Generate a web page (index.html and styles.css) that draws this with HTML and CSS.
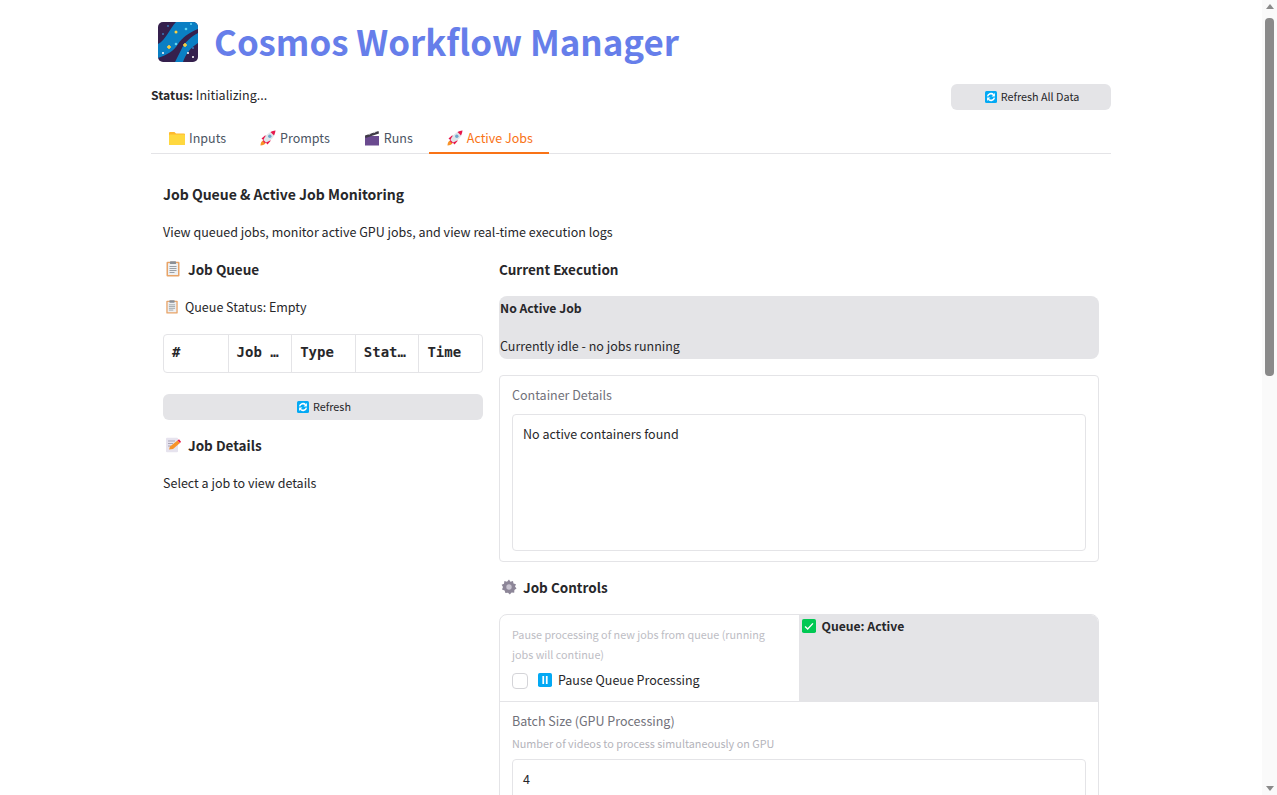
FILE: index.html
```html
<!DOCTYPE html>
<html lang="en">
<head>
    <meta charset="UTF-8">
    <meta name="viewport" content="width=device-width, initial-scale=1.0">
    <title>Cosmos Workflow Manager</title>
    <link rel="stylesheet" href="styles.css">
</head>
<body>

    <svg class="icon-defs" aria-hidden="true">
        <symbol id="i-refresh" viewBox="0 0 16 16">
            <rect width="16" height="16" rx="2" fill="#03a9f4"/>
            <path d="M3.400 7.200A4.700 4.700 0 0 1 11.400 5" fill="none" stroke="#fff" stroke-width="2"/>
            <path d="M12.600 8.800A4.700 4.700 0 0 1 4.600 11" fill="none" stroke="#fff" stroke-width="2"/>
            <path d="M13.200 2.800v4.400H8.800zM2.800 13.200V8.800h4.400z" fill="#fff"/>
        </symbol>
        <symbol id="i-rocket" viewBox="0 0 16 16">
            <path d="M.5 15.500c0-2.500 1-4.500 2.500-5l2.500 2.500c-.5 1.500-2.500 2.500-5 2.500z" fill="#f79329"/>
            <path d="M1.500 8.500 5 5.500 7 6 3.800 10.500zM7.500 14.500l3-3.500-.5-2-4.500 3.200z" fill="#e8174b"/>
            <path d="M3.500 10C5 5.500 9 1.500 15.500.5 15 7 10.500 11 6 12.500z" fill="#dfe6ea"/>
            <path d="M10.500 2C12 1.200 13.800.7 15.500.5 15.300 2.300 14.800 4 14 5.500z" fill="#e8174b"/>
            <circle cx="9.800" cy="6.200" r="1.700" fill="#6fa8cc"/>
            <path d="M3.500 10 6 12.500 5 13.200 2.800 11z" fill="#e8174b"/>
        </symbol>
        <symbol id="i-clipboard" viewBox="0 0 16 16">
            <rect x="1.500" y=".8" width="13" height="14.700" rx="1" fill="#e8a468"/>
            <rect x="3" y="2.200" width="10" height="11.800" fill="#eef0f2"/>
            <rect x="5" y=".3" width="6" height="2.700" rx=".6" fill="#8a8f96"/>
            <path d="M4.500 5.500h7M4.500 7.500h7M4.500 9.500h7M4.500 11.500h5" stroke="#9aa0a6" stroke-width="1"/>
        </symbol>
    </svg>

    <div class="page">
        <div class="container">

            <header class="title-row">
                <svg class="logo" viewBox="0 0 40 40">
                    <defs><clipPath id="logo-clip"><rect width="40" height="40" rx="5"/></clipPath></defs>
                    <g clip-path="url(#logo-clip)">
                        <rect width="40" height="40" fill="#35204d"/>
                        <path d="M0 22C8 18 12 6 18 0H40V7C30 11 24 16 20 22C16 29 9 33 0 36Z" fill="#0a7fc4"/>
                        <path d="M40 11C34 14 27 20 24 26C21 32 19 36 17 40H25C28 32 32 26 40 21Z" fill="#0a7fc4"/>
                        <path d="M9 25h4M11 23v4M25 23h4M27 21v4" stroke="#ffd23f" stroke-width="1.500"/>
                        <circle cx="18" cy="10" r="1.500" fill="#ffd23f"/>
                        <circle cx="28" cy="7" r="1.300" fill="#5fd4f4"/>
                        <circle cx="18" cy="22" r="1.300" fill="#5fd4f4"/>
                        <circle cx="33" cy="2" r="1" fill="#5fd4f4"/>
                        <circle cx="5" cy="31" r="1" fill="#fff"/>
                        <circle cx="35" cy="35" r="1" fill="#fff"/>
                        <circle cx="10" cy="4" r="1" fill="#3a78b8"/>
                        <circle cx="5" cy="12" r="1" fill="#3a78b8"/>
                        <circle cx="30" cy="31" r="1" fill="#fff"/>
                        <circle cx="35" cy="26" r="1" fill="#3a78b8"/>
                    </g>
                </svg>
                <h1>Cosmos Workflow Manager</h1>
            </header>

            <div class="status-row">
                <p class="status"><strong>Status:</strong> Initializing...</p>
                <button class="btn btn-top"><svg class="ico"><use href="#i-refresh"/></svg>Refresh All Data</button>
            </div>

            <nav class="tabs">
                <div class="tab">
                    <svg class="ico-tab" viewBox="0 0 16 16"><path d="M0 3a1 1 0 0 1 1-1h4.500l1.500 1.500H15a1 1 0 0 1 1 1V14a1 1 0 0 1-1 1H1a1 1 0 0 1-1-1z" fill="#ffb92e"/><path d="M0 5.500a1 1 0 0 1 1-1h14a1 1 0 0 1 1 1V14a1 1 0 0 1-1 1H1a1 1 0 0 1-1-1z" fill="#ffd83f"/></svg>
                    Inputs
                </div>
                <div class="tab"><svg class="ico-tab"><use href="#i-rocket"/></svg>Prompts</div>
                <div class="tab">
                    <svg class="ico-tab" viewBox="0 0 16 16"><rect x="1" y="6" width="14" height="9.500" fill="#6a4a8f"/><path d="M1 5.500 14.500 1 15 3.500 1.500 8z" fill="#3e3a45"/><path d="M4 5 5.500 3.400 7.500 2.800 6 4.400zM9 3.300 10.500 1.700 12.500 1.100 11 2.700z" fill="#d8d8dc"/></svg>
                    Runs
                </div>
                <div class="tab tab-active"><svg class="ico-tab"><use href="#i-rocket"/></svg>Active Jobs</div>
            </nav>

            <main class="panel">
                <h2 class="page-heading">Job Queue &amp; Active Job Monitoring</h2>
                <p class="page-desc">View queued jobs, monitor active GPU jobs, and view real-time execution logs</p>

                <div class="columns">
                    <section class="col-left">
                        <h3 class="section-title"><svg class="ico-head"><use href="#i-clipboard"/></svg>Job Queue</h3>
                        <p class="queue-status"><svg class="ico-small"><use href="#i-clipboard"/></svg>Queue Status: Empty</p>

                        <div class="queue-table">
                            <div class="th">#</div>
                            <div class="th">Job …</div>
                            <div class="th">Type</div>
                            <div class="th">Stat…</div>
                            <div class="th">Time</div>
                        </div>

                        <button class="btn btn-wide"><svg class="ico"><use href="#i-refresh"/></svg>Refresh</button>

                        <h3 class="section-title details-title">
                            <svg class="ico-head" viewBox="0 0 16 16"><rect x="1" y=".8" width="12" height="14.500" rx="1" fill="#e6e3ee"/><path d="M3 4h7M3 6.500h5M3 9h3" stroke="#a9a5b8" stroke-width="1"/><path d="M4 12.500 5 9.500 12.500 3.500 15 6 8 12z" fill="#f79329"/><path d="M12.500 3.500 14 2.300 16 4.800 15 6z" fill="#e8174b"/></svg>
                            Job Details
                        </h3>
                        <p class="hint">Select a job to view details</p>
                    </section>

                    <section class="col-right">
                        <h3 class="section-title exec-title">Current Execution</h3>
                        <div class="idle-box">
                            <p><strong>No Active Job</strong></p>
                            <p>Currently idle - no jobs running</p>
                        </div>

                        <div class="field-card">
                            <label class="field-label">Container Details</label>
                            <div class="textbox">No active containers found</div>
                        </div>

                        <h3 class="section-title controls-title">
                            <svg class="ico-head" viewBox="0 0 16 16"><path d="M8 .5 9.400 2.700 12 2 12.500 4.500 15 5.200 14 7.500 15.500 9.600 13.400 11 13.200 13.700 10.600 13.500 8.800 15.500 7 13.700 4.400 14 3.600 11.500 1 10.500 2 8 .6 5.800 3 4.700 3.400 2 6 2.700z" fill="#8d8698"/><circle cx="8" cy="8" r="2.700" fill="#c9c4d1"/></svg>
                            Job Controls
                        </h3>

                        <div class="controls-card">
                            <div class="pause-row">
                                <div class="pause-left">
                                    <p class="info info-wrap">Pause processing of new jobs from queue (running jobs will continue)</p>
                                    <div class="check-row">
                                        <span class="checkbox"></span>
                                        <svg class="ico-pause" viewBox="0 0 16 16"><rect width="16" height="16" rx="2" fill="#03a9f4"/><path d="M5 3.500h2v9H5zM9 3.500h2v9H9z" fill="#fff"/></svg>
                                        <span>Pause Queue Processing</span>
                                    </div>
                                </div>
                                <div class="pause-right">
                                    <svg class="ico-check" viewBox="0 0 16 16"><rect width="16" height="16" rx="2" fill="#00c853"/><path d="M3.500 8.500 6.500 11.500 12.500 5" fill="none" stroke="#fff" stroke-width="1.600"/></svg>
                                    <strong>Queue: Active</strong>
                                </div>
                            </div>
                            <div class="batch-row">
                                <label class="field-label">Batch Size (GPU Processing)</label>
                                <p class="info">Number of videos to process simultaneously on GPU</p>
                                <div class="textbox number-box">4</div>
                            </div>
                        </div>
                    </section>
                </div>
            </main>
        </div>
    </div>

    <div class="scrollbar">
        <span class="arrow arrow-up"></span>
        <span class="thumb"></span>
        <span class="arrow arrow-down"></span>
    </div>

</body>
</html>
```

FILE: styles.css
```css
* {
    box-sizing: border-box;
}

body {
    display: flex;
    align-items: flex-start;
    margin: 0;
    font-family: "Noto Sans CJK JP", "Noto Sans", sans-serif;
    font-size: 12.5px;
    line-height: 20px;
    color: #27272a;
    background-color: #fff;
}

p, h1, h2, h3 {
    margin: 0;
}

strong {
    font-size: 12.2px;
}

.icon-defs {
    display: none;
}

.page {
    flex: 1;
    min-width: 0;
}

.scrollbar {
    position: sticky;
    top: 0;
    display: flex;
    flex-direction: column;
    align-items: center;
    flex-shrink: 0;
    width: 15px;
    height: 100vh;
    padding: 4px 0;
    background-color: #fafafa;
}

.arrow {
    width: 0;
    height: 0;
    border-left: 4.5px solid transparent;
    border-right: 4.5px solid transparent;
}

.arrow-up {
    border-bottom: 5px solid #8a8a8a;
}

.arrow-down {
    margin-top: auto;
    border-top: 5px solid #8a8a8a;
}

.thumb {
    width: 9px;
    height: 358px;
    margin-top: 9px;
    border-radius: 4px;
    background-color: #8a8a8a;
}

.container {
    width: 960px;
    margin: 0 auto;
}

.title-row {
    display: flex;
    align-items: center;
    height: 84px;
    padding-left: 7px;
}

.logo {
    width: 40px;
    height: 40px;
    margin-right: 16px;
}

h1 {
    margin-bottom: 2px;
    font-size: 34.9px;
    line-height: 48px;
    font-weight: 600;
    color: #667eea;
}

.status-row {
    display: flex;
    justify-content: space-between;
    align-items: flex-start;
    height: 41px;
}

.status {
    margin-top: 1px;
}

.btn {
    display: flex;
    align-items: center;
    justify-content: center;
    height: 26px;
    padding: 0 0 2px 2px;
    border: none;
    border-radius: 6px;
    background-color: #e4e4e7;
    color: #27272a;
    font-family: inherit;
    font-size: 10.8px;
}

.btn-top {
    width: 160px;
}

.btn-wide {
    width: 100%;
    margin-top: 21px;
}

.ico {
    width: 12px;
    height: 12px;
    margin: 2px 4px 0 0;
}

.tabs {
    display: flex;
    height: 29px;
    border-bottom: 1px solid #e4e4e7;
}

.tab {
    display: flex;
    align-items: center;
    height: 29px;
    padding: 0 16px 4px 18px;
    color: #4b5563;
}

.tab-active {
    color: #f97316;
    border-bottom: 2px solid #f97316;
    padding-bottom: 2px;
}

.ico-tab {
    width: 16px;
    height: 16px;
    margin-right: 4px;
}

.panel {
    padding: 30px 12px 0;
}

.page-heading {
    font-size: 14px;
    line-height: 20px;
    font-weight: 600;
}

.page-desc {
    margin-top: 18px;
}

.columns {
    display: flex;
    gap: 16px;
    margin-top: 18px;
}

.col-left {
    width: 320px;
}

.col-right {
    width: 600px;
}

.section-title {
    display: flex;
    align-items: center;
    height: 20px;
    padding-bottom: 2px;
    font-size: 13.5px;
    line-height: 18px;
    font-weight: 600;
}

.ico-head {
    width: 16px;
    height: 16px;
    margin: 0 7px 0 2px;
}

.ico-small {
    width: 14px;
    height: 14px;
    margin: 0 6px 0 2px;
}

.queue-status {
    display: flex;
    align-items: center;
    margin-top: 17px;
}

.queue-table {
    display: grid;
    grid-template-columns: repeat(5, 1fr);
    height: 39px;
    margin-top: 17px;
    border: 1px solid #e4e4e7;
    border-radius: 4px;
}

.th {
    display: flex;
    align-items: center;
    padding: 0 0 4px 8px;
    border-left: 1px solid #e4e4e7;
    font-family: "DejaVu Sans Mono", monospace;
    font-size: 14px;
    font-weight: 700;
}

.th:first-child {
    border-left: none;
}

.details-title {
    margin-top: 16px;
}

.hint {
    margin-top: 17px;
}

.idle-box {
    height: 63px;
    margin-top: 16px;
    padding: 2px 1px;
    border-radius: 8px;
    background-color: #e4e4e7;
}

.idle-box p + p {
    margin-top: 18px;
}

.field-card {
    height: 187px;
    margin-top: 16px;
    padding: 9px 12px;
    border: 1px solid #e4e4e7;
    border-radius: 4px;
}

.field-label {
    display: block;
    color: #71717a;
}

.textbox {
    height: 137px;
    margin-top: 9px;
    padding: 9px 10px;
    border: 1px solid #e4e4e7;
    border-radius: 4px;
}

.controls-title {
    margin-top: 16px;
}

.controls-title .ico-head {
    margin-right: 6px;
}

.controls-card {
    margin-top: 16px;
    border: 1px solid #e4e4e7;
    border-radius: 8px;
    overflow: hidden;
}

.pause-row {
    display: flex;
    height: 87px;
    border-bottom: 1px solid #e4e4e7;
}

.pause-left {
    width: 299px;
    padding: 9px 12px 0;
}

.pause-right {
    display: flex;
    align-items: flex-start;
    width: 300px;
    padding: 1px 3px;
    background-color: #e4e4e7;
}

.info {
    font-size: 10.8px;
    color: #b4b4bb;
}

.info-wrap {
    color: #bdbdc4;
}

.check-row {
    display: flex;
    align-items: center;
    margin-top: 6px;
}

.checkbox {
    width: 16px;
    height: 16px;
    margin: 2px 10px 0 0;
    border: 1px solid #d4d4d8;
    border-radius: 4px;
}

.ico-pause {
    width: 14px;
    height: 14px;
    margin-right: 6px;
}

.ico-check {
    width: 14px;
    height: 14px;
    margin: 3px 6px 0 0;
}

.batch-row {
    padding: 9px 12px 12px;
}

.batch-row .info {
    margin-top: 2px;
}

.number-box {
    height: 42px;
    margin-top: 6px;
}
```
